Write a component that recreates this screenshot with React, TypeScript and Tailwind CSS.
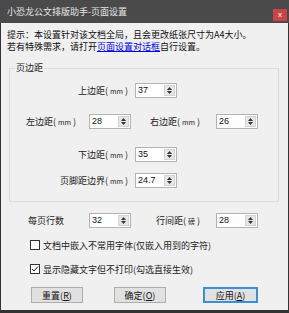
import React from "react";

const Spin = ({ value }: { value: string }) => {
  return (
    <div className="w-[42px] h-[15px] border border-[#b4b4b4] bg-white flex items-center pr-[1px]">
      <span className="flex-1 pl-[2px] text-[9px] leading-none text-[#111] font-['Liberation_Sans',sans-serif]">
        {value}
      </span>
      <div className="w-[11px] h-[11px] bg-[#e6e6e6] border border-[#d4d4d4] flex flex-col items-center justify-center gap-[1px]">
        <svg width="5" height="3" viewBox="0 0 5 3">
          <path d="M2.5 0 L5 3 L0 3 Z" fill="#333" />
        </svg>
        <svg width="5" height="3" viewBox="0 0 5 3">
          <path d="M0 0 L5 0 L2.5 3 Z" fill="#333" />
        </svg>
      </div>
    </div>
  );
};

const Label = ({ text, unit }: { text: string; unit: string }) => (
  <span className="text-[9px] leading-none text-[#222] whitespace-nowrap">
    {text}(<span className="text-[7px] px-[2px]">{unit}</span>)
  </span>
);

const Btn = ({ text, k, active }: { text: string; k: string; active?: boolean }) => (
  <button
    className={
      "h-[16px] flex items-center justify-center text-[9px] leading-none text-[#111] bg-[#e1e1e1] " +
      (active ? "w-[55px] border-2 border-[#3c8fd6]" : "w-[52px] border border-[#adadad]")
    }
  >
    {text}(<span className="underline">{k}</span>)
  </button>
);

export default function App() {
  return (
    <div className="w-[289px] h-[313px] bg-[#333] flex flex-col text-[9px] leading-none font-['Noto_Sans_CJK_SC',sans-serif]">
      <div className="h-[23px] bg-[#4a4a4a] flex items-start justify-between pl-[7px] pr-[2px]">
        <span className="mt-[6px] text-[9px] leading-[12px] text-[#e6e6e6]">小恐龙公文排版助手-页面设置</span>
        <div className="mt-[9px] w-[14px] h-[12px] bg-[#c94545] flex items-center justify-center text-[8px] leading-none text-white font-['Liberation_Sans',sans-serif]">
          x
        </div>
      </div>
      <div className="flex-1 mx-[1px] mb-[3px] bg-[#f0f0f0] flex flex-col">
        <div className="pt-[6px] pl-[6px] text-[9px] leading-[12px] text-[#111]">
          <div>提示：本设置针对该文档全局，且会更改纸张尺寸为A4大小。</div>
          <div>
            若有特殊需求，请打开<span className="text-[#0000ee] underline">页面设置对话框</span>自行设置。
          </div>
        </div>

        <fieldset className="mt-[9px] ml-[8px] w-[270px] border border-[#dcdcdc] pb-[13px]">
          <legend className="ml-[5px] px-[1px] text-[9px] leading-[12px] text-[#222]">页边距</legend>
          <div className="mt-[9px] flex items-center">
            <div className="w-[118px] flex justify-end">
              <Label text="上边距" unit="mm" />
            </div>
            <div className="ml-[7px]">
              <Spin value="37" />
            </div>
          </div>
          <div className="mt-[16px] flex items-center pl-[16px]">
            <div className="w-[63px] flex">
              <Label text="左边距" unit="mm" />
            </div>
            <Spin value="28" />
            <div className="w-[85px] flex justify-end pr-[16px]">
              <Label text="右边距" unit="mm" />
            </div>
            <Spin value="26" />
          </div>
          <div className="mt-[18px] flex items-center">
            <div className="w-[118px] flex justify-end">
              <Label text="下边距" unit="mm" />
            </div>
            <div className="ml-[7px]">
              <Spin value="35" />
            </div>
          </div>
          <div className="mt-[11px] flex items-center">
            <div className="w-[118px] flex justify-end">
              <Label text="页脚距边界" unit="mm" />
            </div>
            <div className="ml-[7px]">
              <Spin value="24.7" />
            </div>
          </div>
        </fieldset>

        <div className="mt-[11px] flex items-center pl-[27px]">
          <div className="w-[61px] text-[#222]">每页行数</div>
          <Spin value="32" />
          <div className="ml-[25px] w-[60px] flex">
            <Label text="行间距" unit="磅" />
          </div>
          <Spin value="28" />
        </div>

        <div className="mt-[11px] h-[12px] flex items-center pl-[29px] gap-[3px]">
          <div className="w-[10px] h-[10px] border border-[#333] bg-white" />
          <span className="text-[#222]">文档中嵌入不常用字体(仅嵌入用到的字符)</span>
        </div>
        <div className="mt-[12px] h-[12px] flex items-center pl-[29px] gap-[3px]">
          <div className="w-[10px] h-[10px] border border-[#333] bg-white flex items-center justify-center">
            <svg width="8" height="8" viewBox="0 0 8 8">
              <path d="M1 4 L3 6 L7 1.5" fill="none" stroke="#222" strokeWidth="1" />
            </svg>
          </div>
          <span className="text-[#222]">显示隐藏文字但不打印(勾选直接生效)</span>
        </div>

        <div className="mt-[12px] flex items-center pl-[30px]">
          <Btn text="重置" k="R" />
          <div className="ml-[31px]">
            <Btn text="确定" k="O" />
          </div>
          <div className="ml-[37px]">
            <Btn text="应用" k="A" active />
          </div>
        </div>
      </div>
    </div>
  );
}
